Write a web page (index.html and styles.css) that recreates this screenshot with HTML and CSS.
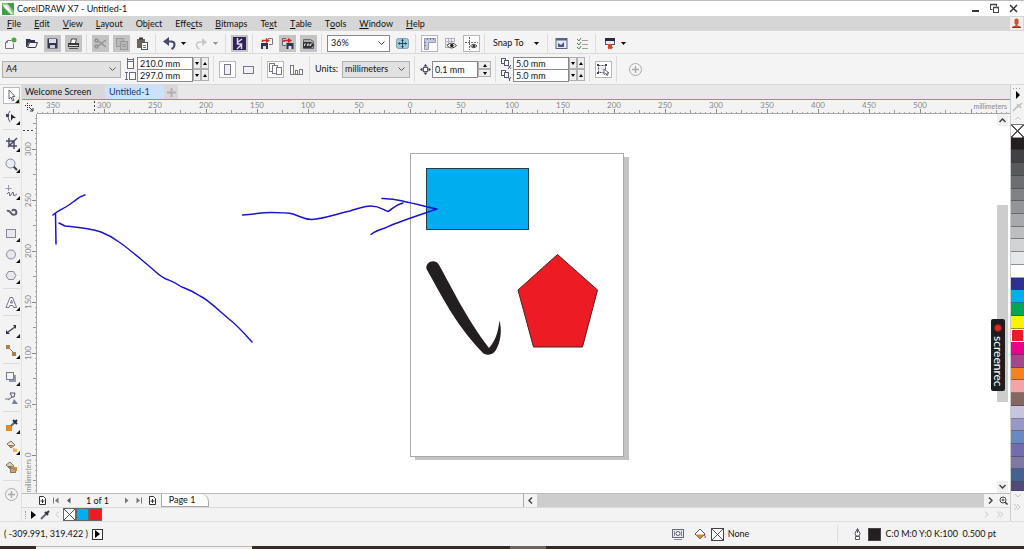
FILE: index.html
```html
<!DOCTYPE html>
<html lang="en">
<head>
<meta charset="utf-8">
<title>CorelDRAW X7 - Untitled-1</title>
<link rel="stylesheet" href="styles.css">
</head>
<body>
<header class="titlebar">
  <svg class="logo" width="12" height="12" viewBox="0 0 12 12"><rect width="12" height="12" fill="#3f9e46"/><path d="M0 0h5l7 8v4H9L1 4z" fill="#7cc576"/><path d="M1 1l4 2 6 8-2 0-7-7z" fill="#fff"/><path d="M3 1l3 1 4 6z" fill="#e4f5e2"/></svg>
  <h1 class="title">CorelDRAW X7 - Untitled-1</h1>
  <div class="window-buttons">
    <button aria-label="Minimize"><svg width="11" height="11"><path d="M2 8h7" stroke="#333" stroke-width="2"/></svg></button>
    <button aria-label="Restore"><svg width="11" height="11" fill="none" stroke="#444"><path d="M3.500 6.500h-2v-5h6v2"/><rect x="4.500" y="4.500" width="5" height="5"/><path d="M4 4.500h6M1 1.500h7" stroke-width="1.500"/></svg></button>
    <button aria-label="Close"><svg width="11" height="11"><path d="M2 2l7 7M9 2l-7 7" stroke="#333" stroke-width="1.500"/></svg></button>
  </div>
</header>

<nav class="menubar">
  <button><u>F</u>ile</button><button><u>E</u>dit</button><button><u>V</u>iew</button><button><u>L</u>ayout</button><button>Ob<u>j</u>ect</button><button>Effe<u>c</u>ts</button><button><u>B</u>itmaps</button><button>Te<u>x</u>t</button><button><u>T</u>able</button><button>T<u>o</u>ols</button><button><u>W</u>indow</button><button><u>H</u>elp</button>
  <button class="account" aria-label="Account"><svg width="11" height="11"><path d="M3.500 1.500q2-2 4 0v4l-1 1v1l3 1v1.500h-8v-1.500l3-1v-1l-1-1z" fill="#d0502a"/><path d="M1 9.500h9" stroke="#8a3a20"/></svg></button>
</nav>

<div class="toolbar standard" role="toolbar" aria-label="Standard">
  <button class="tool" aria-label="New"><svg width="13" height="13"><path d="M3.500 3.500h4M3.500 3.500l-2 2v6h8v-5" fill="none" stroke="#777"/><path d="M1.500 5.500h2v-2" fill="none" stroke="#777"/><circle cx="10" cy="3" r="2.500" fill="#4aa845"/></svg></button>
  <button class="tool" aria-label="Open"><svg width="13" height="13"><path d="M1 2h4l1 1h4v2H4l-2 5H1z" fill="#34344e"/><path d="M4.500 5.500h8l-2 5h-8z" fill="#f5f5fa" stroke="#34344e"/></svg></button>
  <button class="tool shaded" aria-label="Save"><svg width="13" height="13"><path d="M1.500 1.500h9l1 1v9h-10z" fill="#34344e"/><rect x="3" y="2" width="7" height="4" fill="#d8dcec"/><rect x="4" y="8" width="5" height="3" fill="#ccd"/></svg></button>
  <button class="tool shaded" aria-label="Print"><svg width="13" height="13"><path d="M3.500 6l1-4h5l-1 4" fill="#fff" stroke="#444"/><path d="M1 6h11v4H1z" fill="#3a3a3a"/><path d="M2 8.500h9" stroke="#ddd"/><path d="M2 11.500h9" stroke="#555"/></svg></button>
  <i class="sep"></i>
  <button class="tool shaded" aria-label="Cut"><svg width="13" height="13" fill="none" stroke="#929292" stroke-width="1.500"><path d="M4 4l8 6M4 9l8-6"/><circle cx="2.500" cy="3.500" r="1.500"/><circle cx="2.500" cy="9.500" r="1.500"/></svg></button>
  <button class="tool shaded" aria-label="Copy"><svg width="13" height="13" fill="#b8b8b8" stroke="#9a9a9a"><rect x="1.500" y="1.500" width="7" height="8"/><rect x="5.500" y="4.500" width="7" height="8"/><path d="M7 7.500h4M7 9.500h4"/></svg></button>
  <button class="tool" aria-label="Paste"><svg width="13" height="13"><rect x="1" y="2" width="8" height="9" fill="#6e6558"/><path d="M3 1.500h4" stroke="#333" stroke-width="2"/><rect x="5.500" y="5.500" width="6" height="7" fill="#fff" stroke="#555"/><path d="M7 8.500h3M7 10.500h3" stroke="#777"/></svg></button>
  <i class="sep"></i>
  <div class="split"><button class="tool" aria-label="Undo"><svg width="13" height="13"><path d="M6 0v9L0 4.500z" fill="#4a4a6c"/><path d="M5 4.500h3q3.500 0 3.500 3t-3 4.500" fill="none" stroke="#4a4a6c" stroke-width="2"/></svg></button><button class="drop" aria-label="Undo list"><svg width="5" height="3"><path d="M0 0h5L2.500 3z"/></svg></button></div>
  <div class="split"><button class="tool" aria-label="Redo"><svg width="13" height="13"><path d="M7 1v8l5-4z" fill="#c8c8c8"/><path d="M8 5H5q-3.500 0-3.500 3t3 4" fill="none" stroke="#c8c8c8" stroke-width="1.500"/></svg></button><button class="drop faded" aria-label="Redo list"><svg width="5" height="3"><path d="M0 0h5L2.500 3z"/></svg></button></div>
  <i class="sep"></i>
  <button class="tool shaded" aria-label="Search content"><svg width="13" height="13"><rect width="13" height="13" fill="#32215d"/><path d="M4.500 1v6h4v5M9 2L5 5M9 7l-5 5" fill="none" stroke="#ddd" stroke-width="1.500"/></svg></button>
  <i class="sep"></i>
  <button class="tool" aria-label="Import"><svg width="13" height="13"><path d="M8 1.500h4.500v6H9" fill="#fff" stroke="#778"/><rect x="1" y="6" width="7" height="6" fill="#34344e"/><rect x="3" y="9" width="3" height="3" fill="#dde"/><path d="M2.500 5V3.500H6" fill="none" stroke="#d22" stroke-width="1.500"/><path d="M6 1l4 2.500L6 6z" fill="#d22"/></svg></button>
  <button class="tool shaded" aria-label="Export"><svg width="13" height="13"><path d="M5 1.500H1.500v7H5" fill="#ddd" stroke="#667"/><rect x="5.500" y="6" width="7" height="6" fill="#34344e"/><rect x="7.500" y="9" width="3" height="3" fill="#dde"/><path d="M3 5V3.500h4" fill="none" stroke="#c22" stroke-width="1.500"/><path d="M7 1l4 2.500L7 6z" fill="#c22"/></svg></button>
  <button class="tool shaded" aria-label="Publish to PDF"><svg width="13" height="13"><path d="M1.500 2.500h7l3 2v7h-10z" fill="#aaa" stroke="#667"/><path d="M1 5h8l3.500 3L9 11H1z" fill="#333"/><path d="M2.500 9V7H4M5.500 9V7H7v2M8.500 9V7H10" stroke="#ccc" fill="none"/></svg></button>
  <i class="sep"></i>
  <label class="select-box zoom-level"><select aria-label="Zoom level"><option>36%</option></select><svg width="7" height="5"><path d="M.5.5l3 3 3-3" fill="none" stroke="#444"/></svg></label>
  <button class="tool" aria-label="Full screen preview"><svg width="13" height="13"><rect x=".5" y="1.500" width="12" height="10" rx="2" fill="#9fc9d6" stroke="#7fa3b5"/><path d="M6.500 2v9M2 6.500h9" stroke="#234b66"/><path d="M6.500 2L5 4h3zM6.500 11L5 9h3zM2 6.500L4 5v3zM11 6.500L9 5v3z" fill="#234b66"/></svg></button>
  <i class="sep"></i>
  <button class="tool boxed" aria-label="Show rulers"><svg width="13" height="13"><path d="M1.500 1.500h11v4h-7v7h-4z" fill="#c5cbe2" stroke="#9499b3"/><path d="M4.500 1v2M7.500 1v2M10.500 1v2M1 5.500h2M1 8.500h2" stroke="#7a80a0"/></svg></button>
  <button class="tool" aria-label="Show grid"><svg width="13" height="13"><path d="M1 1.500h10M1 4.500h10M1 7.500h4M1 10.500h4M1.500 1v10M4.500 1v10M7.500 1v4M10.500 1v4" stroke="#b1b1c2"/><path d="M3 8.500q4.500-5 9.500 0-5 5-9.500 0z" fill="#fff" stroke="#444"/><circle cx="7.800" cy="8.500" r="1.800" fill="#222"/></svg></button>
  <button class="tool boxed" aria-label="Show guidelines"><svg width="13" height="13"><path d="M4.500 0v13M0 5.500h13" stroke="#666" stroke-dasharray="2 1"/><path d="M5.500 9q3-3.500 6.500 0-3.500 3.500-6.500 0z" fill="#fff" stroke="#555"/><circle cx="8.800" cy="9" r="1.500" fill="#333"/></svg></button>
  <i class="sep"></i>
  <button class="snap">Snap To<svg width="5" height="3"><path d="M0 0h5L2.500 3z"/></svg></button>
  <i class="sep"></i>
  <button class="tool" aria-label="Options"><svg width="13" height="13"><rect x="1" y="1.500" width="11" height="10" fill="#e7eaf7" stroke="#5a6285"/><path d="M1 2.500h11" stroke="#5a6285" stroke-width="2"/><path d="M3 10V6l3 2 3-3v5z" fill="#4b5684"/></svg></button>
  <button class="tool" aria-label="Object properties"><svg width="13" height="13" fill="none" stroke="#9aa59a"><path d="M6 3.500h6M6 7.500h6M6 11.500h6"/><path d="M1 2l2 2 2-3M1 6l2 2 2-3M1 10l2 2 2-3" stroke="#4c8a4c"/></svg></button>
  <i class="sep"></i>
  <div class="split"><button class="tool" aria-label="Application launcher"><svg width="13" height="13"><rect x="2.500" y="1.500" width="9" height="6" fill="#e8e8f0" stroke="#55556e"/><path d="M2 2.500h10" stroke="#2a2a44" stroke-width="3"/><path d="M5 7h4v3h1.500L8 12.500l-1-1-1.500 1L4.500 10H5z" fill="#d8452c"/></svg></button><button class="drop" aria-label="Launcher list"><svg width="5" height="3"><path d="M0 0h5L2.500 3z"/></svg></button></div>
</div>

<div class="toolbar properties" role="toolbar" aria-label="Property bar">
  <label class="select-box flat page-size"><select aria-label="Page size"><option>A4</option></select><svg width="7" height="5"><path d="M.5.5l3 3 3-3" fill="none" stroke="#555"/></svg></label>
  <div class="pair">
    <div class="field"><svg width="11" height="11" fill="none" stroke="#6a6a88"><rect x="2.500" y="3.500" width="6" height="7" fill="#fff"/><path d="M2 1.500h7M2.500 0v3M8.500 0v3"/></svg><input aria-label="Page width" value="210.0 mm"><button aria-label="Decrease"><svg width="4" height="3"><path d="M0 0h4L2 3z"/></svg></button><button aria-label="Increase"><svg width="4" height="3"><path d="M0 3h4L2 0z"/></svg></button></div>
    <div class="field"><svg width="11" height="11" fill="none" stroke="#6a6a88"><rect x="4.500" y="2.500" width="6" height="7" fill="#fff"/><path d="M1.500 2v8M0 2.500h3M0 9.500h3"/></svg><input aria-label="Page height" value="297.0 mm"><button aria-label="Decrease"><svg width="4" height="3"><path d="M0 0h4L2 3z"/></svg></button><button aria-label="Increase"><svg width="4" height="3"><path d="M0 3h4L2 0z"/></svg></button></div>
  </div>
  <i class="sep"></i>
  <button class="tool boxed" aria-label="Portrait"><svg width="13" height="13"><rect x="3.500" y="1.500" width="6" height="10" fill="#f0f0f6" stroke="#778"/></svg></button>
  <button class="tool" aria-label="Landscape"><svg width="13" height="13"><rect x="1.500" y="3.500" width="10" height="7" fill="#f0f0f6" stroke="#778"/></svg></button>
  <i class="sep"></i>
  <button class="tool boxed" aria-label="All pages"><svg width="13" height="13" fill="#fff" stroke="#778"><rect x=".5" y=".5" width="5" height="8"/><rect x="3.500" y="2.500" width="5" height="8"/><rect x="7.500" y="4.500" width="5" height="7"/></svg></button>
  <button class="tool" aria-label="Current page"><svg width="13" height="13" fill="#fff" stroke="#778"><rect x=".5" y="2.500" width="3" height="9"/><rect x="5.500" y="7.500" width="2" height="4"/><rect x="9.500" y="6.500" width="3" height="5"/><path d="M4 11.500h6"/></svg></button>
  <i class="sep"></i>
  <label class="units-label" for="units">Units:</label>
  <div class="select-box flat units"><select id="units"><option>millimeters</option></select><svg width="7" height="5"><path d="M.5.5l3 3 3-3" fill="none" stroke="#555"/></svg></div>
  <i class="sep"></i>
  <div class="field nudge"><svg width="11" height="11"><rect x="3.500" y="3.500" width="4" height="4" fill="#fff" stroke="#555577"/><path d="M5.500 0L3.500 2.500h4zM5.500 11l-2-2.500h4zM0 5.500l2.500-2v4zM11 5.500l-2.500-2v4z" fill="#333344"/></svg><input aria-label="Nudge distance" value="0.1 mm"><div class="spin"><button aria-label="Increase"><svg width="4" height="3"><path d="M0 3h4L2 0z"/></svg></button><button aria-label="Decrease"><svg width="4" height="3"><path d="M0 0h4L2 3z"/></svg></button></div></div>
  <i class="sep"></i>
  <div class="pair">
    <div class="field"><svg width="11" height="11" fill="#fff" stroke="#555577"><rect x=".5" y=".5" width="4" height="5"/><rect x="3.500" y="2.500" width="4" height="5"/><path d="M7 7l3 4M10 7l-3 4"/></svg><input aria-label="Duplicate distance x" value="5.0 mm"><button aria-label="Decrease"><svg width="4" height="3"><path d="M0 0h4L2 3z"/></svg></button><button aria-label="Increase"><svg width="4" height="3"><path d="M0 3h4L2 0z"/></svg></button></div>
    <div class="field"><svg width="11" height="11" fill="#fff" stroke="#555577"><rect x=".5" y=".5" width="4" height="5"/><rect x="3.500" y="2.500" width="4" height="5"/><path d="M7 7l1.500 2L10 7M8.500 9v2"/></svg><input aria-label="Duplicate distance y" value="5.0 mm"><button aria-label="Decrease"><svg width="4" height="3"><path d="M0 0h4L2 3z"/></svg></button><button aria-label="Increase"><svg width="4" height="3"><path d="M0 3h4L2 0z"/></svg></button></div>
  </div>
  <i class="sep"></i>
  <button class="tool boxed" aria-label="Treat as filled"><svg width="13" height="13"><rect x="1.500" y="2.500" width="7" height="7" fill="#f0f0fa" stroke="#556" stroke-dasharray="2 1"/><path d="M0 1h2v2H0zM8 1h2v2H8zM0 9h2v2H0z" fill="#445"/><path d="M7 6l5 4-2 0 1 2-1 .5-1-2-2 1z" fill="#fff" stroke="#667"/></svg></button>
  <i class="sep"></i>
  <button class="tool add" aria-label="Customize"><svg width="13" height="13" fill="none" stroke="#aaa"><circle cx="6.500" cy="6.500" r="6"/><path d="M6.500 3v7M3 6.500h7" stroke-width="1.500"/></svg></button>
</div>

<main class="workspace">
  <aside class="toolbox">
    <button class="tool boxed fly" aria-label="Pick"><svg width="13" height="13"><path d="M4 1v9l2-2 1.500 4 1.500-.5L7.500 7.500H10z" fill="#fff" stroke="#667"/></svg></button>
    <button class="tool fly" aria-label="Shape"><svg width="13" height="13"><path d="M5 12Q1 6 5 1" fill="none" stroke="#556"/><rect x="1" y="4" width="3" height="3" fill="#445"/><path d="M6 4l5 4H8l-2 3z" fill="#223"/></svg></button>
    <i class="sep"></i>
    <button class="tool fly" aria-label="Crop"><svg width="13" height="13" fill="none" stroke="#4c4c68" stroke-width="1.500"><path d="M4 1v8h8M1 4h8v8M12 1L3 10"/></svg></button>
    <button class="tool fly" aria-label="Zoom"><svg width="13" height="13"><path d="M8 8l4 4" stroke="#445" stroke-width="2"/><circle cx="5.500" cy="5.500" r="4.500" fill="#e9edf5" stroke="#889"/></svg></button>
    <i class="sep"></i>
    <button class="tool fly" aria-label="Freehand"><svg width="13" height="13" fill="none" stroke="#667"><path d="M3.500 0v6M.5 3.500h6" stroke="#99a"/><path d="M2 9l2-2 1 4 3-4 1 4 3-2"/></svg></button>
    <button class="tool" aria-label="Artistic media"><svg width="13" height="13" fill="none" stroke="#5a5a6c" stroke-width="2"><path d="M2 5q2-1 4 2t5 1q1-3-1-4t-3 1"/></svg></button>
    <button class="tool fly" aria-label="Rectangle"><svg width="13" height="13"><rect x="1.500" y="2.500" width="9" height="8" fill="#e8e8ee" stroke="#889"/></svg></button>
    <button class="tool fly" aria-label="Ellipse"><svg width="13" height="13"><ellipse cx="6" cy="6.500" rx="4.500" ry="4.500" fill="#e8e8ee" stroke="#889"/></svg></button>
    <button class="tool fly" aria-label="Polygon"><svg width="13" height="13"><path d="M3.500 2.500h5L11 6.500l-2.500 4h-5L1 6.500z" fill="#e8e8ee" stroke="#889"/></svg></button>
    <i class="sep"></i>
    <button class="tool fly" aria-label="Text"><svg width="13" height="13" fill="none" stroke="#778"><path d="M1 11.500h3l.8-2h3l.8 2h3L7.500 1.500H5z" fill="#fff"/><path d="M5.500 7h2L6.500 4z"/></svg></button>
    <i class="sep"></i>
    <button class="tool fly" aria-label="Dimension"><svg width="13" height="13"><path d="M3 9l7-5" stroke="#445" stroke-width="1.500"/><path d="M1 7l4 4H1zM8 2l3 4V2z" fill="#334"/></svg></button>
    <button class="tool fly" aria-label="Connector"><svg width="13" height="13"><path d="M4 4l6 6" stroke="#778"/><rect x="1" y="1" width="4" height="4" fill="#b07f48"/><rect x="7" y="8" width="4" height="4" fill="#b07f48"/></svg></button>
    <i class="sep"></i>
    <button class="tool fly" aria-label="Drop shadow"><svg width="13" height="13"><rect x="4" y="4" width="7" height="7" fill="#9298ac"/><rect x="1.500" y="1.500" width="7" height="7" fill="#f2f2fa" stroke="#778"/></svg></button>
    <button class="tool" aria-label="Transparency"><svg width="13" height="13"><path d="M5 1h5l-1 4H7zM7 5L3 8" fill="#eef" stroke="#556"/><path d="M7 12l2-5 4 5z" fill="#77809c"/><path d="M0 7h4" stroke="#778"/></svg></button>
    <i class="sep"></i>
    <button class="tool fly" aria-label="Color eyedropper"><svg width="13" height="13"><rect x="1" y="6" width="6" height="6" fill="#e28b28"/><path d="M6 7l4-4" stroke="#566884" stroke-width="2"/><path d="M8 1l4 4M9 4l3-3" stroke="#243047" stroke-width="2"/></svg></button>
    <button class="tool fly" aria-label="Interactive fill"><svg width="13" height="13"><path d="M2 4l4-3 4 4-4 3z" fill="#e8e0d0" stroke="#776"/><path d="M3 5h6L6 7z" fill="#a87038"/><path d="M8 8l4 1v3H8z" fill="#eeb44a"/></svg></button>
    <button class="tool" aria-label="Smart fill"><svg width="13" height="13"><path d="M1 4l4-3 4 4-4 3z" fill="#ddd0bb" stroke="#776"/><path d="M2 5h6L5 7z" fill="#946238"/><rect x="5.500" y="7.500" width="5" height="4" fill="#d9a860" stroke="#876"/><rect x="8" y="6" width="4" height="4" fill="#c78d47"/></svg></button>
    <i class="sep"></i>
    <button class="tool" aria-label="Customize toolbox"><svg width="13" height="13" fill="none" stroke="#aaa"><circle cx="6.500" cy="6.500" r="6"/><path d="M6.500 3v7M3 6.500h7" stroke-width="1.500"/></svg></button>
  </aside>

  <section class="document">
    <div class="tabs" role="tablist">
      <button class="tab" role="tab">Welcome Screen</button><button class="tab active" role="tab">Untitled-1</button><button class="tab new" aria-label="New document"><svg width="9" height="9"><path d="M4.500 0v9M0 4.500h9" stroke="#b0b0b0" stroke-width="2"/></svg></button>
    </div>
    <div class="sheet">
      <button class="origin" aria-label="Ruler origin"><svg width="11" height="11" fill="none" stroke="#333"><path d="M3.500 1v8M1 3.500h8" stroke-dasharray="1 1"/><path d="M5 5l4 4M9 6v3H6"/></svg></button>
      <div class="ruler-x">
        <svg class="scale">
          <defs><pattern id="ticks-x" x="16" y="0" width="51" height="14" patternUnits="userSpaceOnUse"><path d="M.5 9v4" stroke="#888"/><path d="M25.500 10v3" stroke="#999"/><path d="M5.500 12v1M10.500 12v1M15.500 12v1M20.500 12v1M30.500 12v1M35.500 12v1M40.500 12v1M45.500 12v1" stroke="#aaa"/></pattern></defs>
          <rect width="100%" height="14" fill="url(#ticks-x)"/>
          <path d="M57.500 1v12" stroke="#444" stroke-dasharray="2 2"/>
          <g text-anchor="middle"><text x="16" y="8">350</text><text x="67" y="8">300</text><text x="118" y="8">250</text><text x="169" y="8">200</text><text x="220" y="8">150</text><text x="271" y="8">100</text><text x="322" y="8">50</text><text x="373" y="8">0</text><text x="424" y="8">50</text><text x="475" y="8">100</text><text x="526" y="8">150</text><text x="577" y="8">200</text><text x="628" y="8">250</text><text x="679" y="8">300</text><text x="730" y="8">350</text><text x="781" y="8">400</text><text x="832" y="8">450</text><text x="883" y="8">500</text></g>
        </svg>
        <span class="unit">millimeters</span>
      </div>
      <div class="ruler-y">
        <svg class="scale">
          <defs><pattern id="ticks-y" x="0" y="35" width="15" height="51" patternUnits="userSpaceOnUse"><path d="M10 .5h4" stroke="#888"/><path d="M11 25.500h3" stroke="#999"/><path d="M13 5.500h1M13 10.500h1M13 15.500h1M13 20.500h1M13 30.500h1M13 35.500h1M13 40.500h1M13 45.500h1" stroke="#aaa"/></pattern></defs>
          <rect width="15" height="100%" fill="url(#ticks-y)"/>
          <path d="M1 16.500h12" stroke="#444" stroke-dasharray="2 2"/>
          <g text-anchor="middle"><text transform="translate(9 35) rotate(-90)">300</text><text transform="translate(9 86) rotate(-90)">250</text><text transform="translate(9 137) rotate(-90)">200</text><text transform="translate(9 188) rotate(-90)">150</text><text transform="translate(9 239) rotate(-90)">100</text><text transform="translate(9 290) rotate(-90)">50</text><text transform="translate(9 341) rotate(-90)">0</text></g>
        </svg>
        <span class="unit">millimeters</span>
      </div>
      <div class="canvas">
        <svg class="drawing">
          <g transform="translate(-37 -114)">
            <path d="M415 157h214v303H415z" fill="#c3c3c3"/>
            <rect x="410.500" y="153.500" width="213" height="303" fill="#fff" stroke="#aaa"/>
            <rect x="426.500" y="168.500" width="102" height="61" fill="#00aeef" stroke="#20404d"/>
            <path d="M557.500 254.500l40 35.500-15 57h-49l-15.500-57z" fill="#ed1c24" stroke="#4d2020"/>
            <path d="M426.500 269C425 262 435 258 439 265C451 286 466 318 489 348C496 340 498 332 499.500 320.500C502 330 501 341 496 350C492 356 485 356 482 352C455 323 445 302 426.500 269z" fill="#231f20"/>
            <g fill="none" stroke="#1c14c8" stroke-width="1.500" stroke-linecap="round" stroke-linejoin="round">
              <path d="M242.500 215C257 214 260 212.500 271 212.500C281 212.500 287 212.500 293 214C302 217 304 219.500 312 219.500C323 219 338 213.500 350 211C360 208 364 206 371 206C380 206 383 210 388 211.500C393 209 394 205 403 203"/>
              <path d="M382 198.500C397 198 417 205 437 209C417 216 397 222 385 228C378 230 374 232 371 234.500"/>
              <path d="M252 342C244 333 237 325 229 319C215 307 207 299 200 296C190 289 183 288 180 286C173 281 171 281 166 279C158 275 154 270 149 266C137 256 128 248 119 242C111 236 106 234 101 232C89 228 75 227 65 226L59 223"/>
              <path d="M53 215C58 210 66 208 73 202C79 198 78 197 85 195M55.500 213L56 244"/>
            </g>
          </g>
        </svg>
        <div class="scroll-y">
          <button aria-label="Scroll up"><svg width="7" height="5"><path d="M.5 4l3-3 3 3" fill="none" stroke="#444" stroke-width="1.500"/></svg></button>
          <i class="rest-before"></i><i class="thumb"></i><i class="rest-after"></i>
          <button aria-label="Scroll down"><svg width="7" height="5"><path d="M.5 1l3 3 3-3" fill="none" stroke="#444" stroke-width="1.500"/></svg></button>
        </div>
        <button class="recorder"><i class="rec"></i>screenrec</button>
      </div>
    </div>
    <div class="pages">
      <div class="page-nav">
        <button aria-label="Add page before"><svg width="9" height="9"><path d="M1.500.5h4l2 2v6h-6z" fill="#fff" stroke="#333"/><path d="M4.500 3v4M2.500 5h4" stroke="#333"/></svg></button>
        <button aria-label="First page"><svg width="9" height="9"><path d="M2.500 1.500v6" stroke="#777"/><path d="M7.500 1.500v6L4 4.500z" fill="#777"/></svg></button>
        <button aria-label="Previous page"><svg width="9" height="9"><path d="M6.500 1.500v6L3 4.500z" fill="#555566"/></svg></button>
        <span class="count">1 of 1</span>
        <button aria-label="Next page"><svg width="9" height="9"><path d="M3 1.500v6l3.500-3z" fill="#777"/></svg></button>
        <button aria-label="Last page"><svg width="9" height="9"><path d="M1.500 1.500v6L5 4.500z" fill="#777"/><path d="M6.500 1.500v6" stroke="#777"/></svg></button>
        <button aria-label="Add page after"><svg width="9" height="9"><path d="M1.500.5h4l2 2v6h-6z" fill="#fff" stroke="#333"/><path d="M4.500 3v4M2.500 5h4" stroke="#333"/></svg></button>
        <button class="page-tab">Page 1</button>
      </div>
      <div class="scroll-x">
        <button aria-label="Scroll left"><svg width="5" height="7"><path d="M4 .5l-3 3 3 3" fill="none" stroke="#444" stroke-width="1.500"/></svg></button>
        <i class="thumb"></i>
        <button aria-label="Scroll right"><svg width="5" height="7"><path d="M1 .5l3 3-3 3" fill="none" stroke="#444" stroke-width="1.500"/></svg></button>
        <button aria-label="Navigator"><svg width="9" height="9"><path d="M5.500 5.500l3 3" stroke="#333" stroke-width="1.500"/><circle cx="4" cy="4" r="3" fill="#fff" stroke="#444"/><path d="M2.500 4h3M4 2.500v3" stroke="#444"/></svg></button>
      </div>
    </div>
    <div class="used-colors">
      <i class="grip"></i>
      <button class="mini" aria-label="Palette menu"><svg width="5" height="8"><path d="M0 0v8l5-4z"/></svg></button>
      <button class="mini" aria-label="Eyedropper"><svg width="10" height="10"><path d="M1 9l5-5" stroke="#667" stroke-width="2"/><path d="M5 2l3 3M6 4l3-3" stroke="#333344" stroke-width="2"/></svg></button>
      <button class="mini narrow" aria-label="Scroll palette"><svg width="5" height="7"><path d="M4 .5l-3 3 3 3" fill="none" stroke="#c4c4c4"/></svg></button>
      <button class="chip none" aria-label="No color"></button><button class="chip cyan" aria-label="Cyan"></button><button class="chip red" aria-label="Red"></button>
      <span class="more"><svg width="22" height="7" fill="none" stroke="#c4c4c4"><path d="M1 .5l3 3-3 3M13 .5l3 3-3 3M16 .5l3 3-3 3"/></svg></span>
    </div>
  </section>

  <aside class="palette">
    <div class="palette-head">
      <svg width="13" height="38"><path d="M2 3.500h8" stroke="#999" stroke-dasharray="1 2"/><path d="M5 6v8l4-4z"/><path d="M2 26l5-5M6 19l4 4M8 21l3-3" stroke="#bbb" stroke-width="1.500"/><path d="M4 35l3-3 3 3" fill="none" stroke="#ccc"/></svg>
    </div>
    <div class="swatches">
      <button class="none" aria-label="No color"></button>
      <button style="background:#231f20" aria-label="Black"></button>
      <button style="background:#414042" aria-label="90% black"></button>
      <button style="background:#58595b" aria-label="80% black"></button>
      <button style="background:#6d6e71" aria-label="70% black"></button>
      <button style="background:#808285" aria-label="60% black"></button>
      <button style="background:#939598" aria-label="50% black"></button>
      <button style="background:#a7a9ac" aria-label="40% black"></button>
      <button style="background:#bcbec0" aria-label="30% black"></button>
      <button style="background:#d1d3d4" aria-label="20% black"></button>
      <button style="background:#e6e7e8" aria-label="10% black"></button>
      <button style="background:#ffffff" aria-label="White"></button>
      <button style="background:#2e3192" aria-label="Blue"></button>
      <button style="background:#00aeef" aria-label="Cyan"></button>
      <button style="background:#00a651" aria-label="Green"></button>
      <button style="background:#fff200" aria-label="Yellow"></button>
      <button class="current" style="background:#ed1c24" aria-label="Red"></button>
      <button style="background:#ec008c" aria-label="Magenta"></button>
      <button style="background:#a3488c" aria-label="Purple"></button>
      <button style="background:#f58220" aria-label="Orange"></button>
      <button style="background:#f5a3a8" aria-label="Pink"></button>
      <button style="background:#836760" aria-label="Brown"></button>
      <button style="background:#c6c4e0" aria-label="Lavender"></button>
      <button style="background:#9996c8" aria-label="Light violet"></button>
      <button style="background:#688ac4" aria-label="Soft blue"></button>
      <button style="background:#736cb0" aria-label="Violet"></button>
      <button style="background:#8078a4" aria-label="Grey violet"></button>
      <button style="background:#44628f" aria-label="Steel blue"></button>
      <button class="last" style="background:#55497c" aria-label="Deep violet"></button>
    </div>
    <div class="palette-foot"><svg width="13" height="24" fill="none" stroke="#c4c4c4"><path d="M4 3l3 3 3-3M3 13l3 3-3 3M6 13l3 3-3 3"/></svg></div>
  </aside>
</main>

<footer class="statusbar">
  <span>( -309.991, 319.422 )</span>
  <button class="expand" aria-label="Status options"><svg width="5" height="8"><path d="M0 0v8l5-4z"/></svg></button>
  <div class="fill-info">
    <svg width="12" height="12"><rect x=".5" y="1.500" width="11" height="8" fill="#e8e8f0" stroke="#667"/><circle cx="6" cy="5.500" r="2" fill="#fff" stroke="#556"/><path d="M2.500 3v5M9.500 3v5M2 11.500h8" stroke="#889"/></svg>
    <svg class="bucket" width="12" height="12"><path d="M1 6l5-5 5 5-5 5z" fill="#fff" stroke="#556"/><path d="M1.500 6.500h9L6 11z" fill="#d58a2e"/><path d="M10 6q2 3 1 4" stroke="#a33" fill="none"/></svg>
    <i class="box none"></i><span>None</span>
  </div>
  <div class="outline-info">
    <svg width="9" height="12"><path d="M4.500.5L2 5.500 3 8h3l1-2.500zM2.500 8.500h4v3h-4zM4.500 1v4" fill="#fff" stroke="#556"/></svg>
    <i class="box black"></i><span>C:0 M:0 Y:0 K:100 &nbsp;0.500 pt</span>
  </div>
</footer>
<div class="taskbar"><i class="search"></i><i class="app"></i></div>
</body>
</html>
```

FILE: styles.css
```css
* { box-sizing: border-box; }

body {
  margin: 0;
  height: 100vh;
  display: flex;
  flex-direction: column;
  overflow: hidden;
  background: #f3f3f3;
  color: #111;
  font: 9px/12px Lato, "Open Sans", sans-serif;
}

button, input, select { font: inherit; color: inherit; }

button {
  padding: 0;
  border: 0;
  background: none;
  display: flex;
  align-items: center;
  justify-content: center;
}

svg { display: block; flex: none; }

/* Title and menu */
.titlebar {
  height: 16px;
  flex: none;
  display: flex;
  align-items: center;
  gap: 3px;
  padding: 0 2px;
  border-top: 1px solid #bbb;
  background: #fff;
}
.title { margin: 0; font-size: 9px; font-weight: 400; }
.window-buttons { display: flex; gap: 8px; margin-left: auto; padding-right: 3px; }

.menubar {
  height: 15px;
  flex: none;
  display: flex;
  align-items: center;
  gap: 13px;
  padding-left: 7px;
  background: #d6d6d6;
}
.menubar u { text-underline-offset: 1px; }
.account { width: 13px; height: 13px; margin: 0 1px 0 auto; background: #eee; }

/* Toolbars */
.toolbar {
  height: 23px;
  flex: none;
  display: flex;
  align-items: center;
  gap: 4px;
  padding: 0 2px;
  border-bottom: 1px solid #dadada;
  background: #f4f4f4;
}
.toolbar.standard { padding-top: 2px; }
.toolbar.properties { height: 31px; }

.tool { width: 17px; height: 17px; flex: none; position: relative; }
.tool.shaded { background: #c4c4c4; }
.tool.boxed { border: 1px solid #b8b8b8; background: #fff; }
.tool.add { margin-left: 5px; }
.split { display: flex; }
.drop { width: 11px; }
.faded { opacity: .4; }
.snap { gap: 10px; padding: 0 4px 0 3px; }

.sep { width: 2px; height: 19px; flex: none; border-left: 1px solid #dcdcdc; }
.properties .sep { height: 26px; }

.select-box {
  height: 17px;
  display: flex;
  align-items: center;
  padding-right: 4px;
  border: 1px solid #888;
  background: #fff;
}
.select-box select {
  flex: 1;
  min-width: 0;
  padding: 0 3px;
  border: 0;
  appearance: none;
  background: none;
}
.select-box.flat { border-color: #b0b0b0; background: #e1e1e1; }
.zoom-level { width: 63px; }
.page-size { width: 119px; }
.units { width: 68px; }
.units select { padding: 0 2px; }
.units-label { width: 23px; }

.pair { display: flex; flex-direction: column; }
.field { display: flex; align-items: center; height: 12px; }
.field > svg { margin-right: 1px; }
.field input {
  width: 56px;
  height: 13px;
  padding: 0 2px;
  border: 1px solid #888;
  background: #fff;
}
.field button {
  width: 8px;
  height: 12px;
  border: 1px solid #b0b0b0;
  background: #eee;
}
.field.nudge { height: 17px; }
.nudge input { width: 46px; height: 17px; }
.spin { display: flex; flex-direction: column; }
.spin button { width: 13px; height: 8px; }

/* Workspace */
.workspace {
  flex: 1;
  min-height: 0;
  display: grid;
  grid-template-columns: 22px minmax(0, 1fr) 14px;
}
.toolbox {
  display: flex;
  flex-direction: column;
  align-items: center;
  gap: 4px;
  padding: 2px 1px 0 2px;
  border-right: 1px solid #e2e2e2;
  overflow: hidden;
}
.toolbox .sep { width: 17px; height: 2px; border-left: 0; border-top: 1px solid #dcdcdc; }
.fly::after {
  content: "";
  position: absolute;
  right: 0;
  bottom: 0;
  border: 2px solid #111;
  border-top-color: transparent;
  border-left-color: transparent;
}

.document { display: flex; flex-direction: column; min-height: 0; }
.tabs {
  height: 15px;
  flex: none;
  display: flex;
  background: #e8e8e8;
  border-bottom: 1px solid #3db1c8;
}
.tab { padding: 0 3px; width: 83px; justify-content: flex-start; background: #d8d8d8; }
.tab.active { width: 59px; padding: 0 4px; background: #cce2fb; color: #123a70; }
.tab.new { width: 14px; justify-content: center; }

.sheet {
  flex: 1;
  min-height: 0;
  display: grid;
  grid-template: 14px minmax(0, 1fr) / 15px minmax(0, 1fr);
}
.scale { width: 100%; height: 100%; font-size: 8px; fill: #888; }
.unit { font-size: 7px; line-height: 8px; color: #888; }
.ruler-x { display: flex; border-bottom: 1px solid #aaa; position: relative; }
.ruler-x .scale { min-width: 0; flex: 1 1 0; }
.ruler-x .unit { position: absolute; right: 3px; top: 2px; }
.ruler-y { border-right: 1px solid #aaa; position: relative; }
.ruler-y .unit { position: absolute; left: 2px; bottom: 0; writing-mode: vertical-rl; transform: rotate(180deg); }

.canvas { display: flex; position: relative; background: #fff; padding-right: 2px; }
.drawing { flex: 1 1 0; min-width: 0; height: 100%; }
.scroll-y { width: 11px; display: flex; flex-direction: column; }
.scroll-y button { height: 12px; background: #f0f0f0; }
.thumb { background: #cdcdcd; }
.scroll-y .thumb { flex: 196; }
.rest-before { flex: 79; }
.rest-after { flex: 79; }
.recorder {
  position: absolute;
  right: 5px;
  top: 205px;
  width: 14px;
  height: 72px;
  gap: 4px;
  border-radius: 2px;
  background: #1d1d1d;
  color: #fff;
  font: 12px/14px Lato, sans-serif;
  writing-mode: vertical-rl;
}
.rec { width: 8px; height: 8px; border: 1px solid #8c1a14; border-radius: 50%; background: #e02a20; }

.pages { height: 14px; flex: none; display: flex; padding-left: 15px; border-top: 1px solid #bbb; }
.page-nav { flex: 486; display: flex; align-items: center; gap: 4px; padding-left: 1px; border-right: 1px solid #aaa; }
.page-nav button { width: 9px; }
.count { padding: 0 9px; }
.page-nav .page-tab {
  width: 48px;
  height: 13px;
  padding-right: 6px;
  border: solid #aaa;
  border-width: 0 1px 1px;
  border-radius: 0 8px 0 0;
  background: #fff;
}
.scroll-x { flex: 487; display: flex; align-items: stretch; background: #fff; }
.scroll-x button { width: 13px; background: #f3f3f3; }
.scroll-x .thumb { flex: 1; }

.used-colors {
  height: 14px;
  flex: none;
  display: flex;
  align-items: center;
  padding-left: 3px;
  border-top: 1px solid #dadada;
}
.grip { width: 2px; height: 8px; border-left: 1px dotted #999; }
.mini { width: 12px; height: 12px; }
.used-colors .chip { width: 13px; height: 13px; border: 1px solid #666; }
.used-colors .chip.cyan { background: #00aeef; }
.used-colors .chip.red { background: #ed1c24; }
.none {
  background:
    linear-gradient(45deg, transparent 46%, #555 46%, #555 54%, transparent 54%),
    linear-gradient(-45deg, transparent 46%, #555 46%, #555 54%, transparent 54%),
    #fff;
}
.more { margin-left: auto; padding-right: 4px; }

.palette { display: flex; flex-direction: column; min-height: 0; border-left: 1px solid #ccc; }
.palette-head { height: 39px; }
.palette-foot { height: 30px; }
.swatches { flex: 1; min-height: 0; display: flex; flex-direction: column; border: 1px solid #777; border-width: 1px 0 0; }
.swatches button { flex: 3 3 0; border-bottom: 1px solid rgba(60, 60, 60, .5); }
.swatches .current { border: 1px solid #fff; }
.swatches .last { flex: 2 2 0; }

/* Status bar */
.statusbar {
  height: 25px;
  flex: none;
  display: flex;
  align-items: center;
  gap: 4px;
  padding: 0 28px 0 4px;
  border-top: 1px solid #dedede;
}
.expand { width: 11px; height: 11px; border: 1px solid #333; background: #fff; }
.fill-info, .outline-info { display: flex; align-items: center; gap: 3px; }
.fill-info { margin-left: auto; }
.fill-info .bucket { margin: 0 2px 0 7px; }
.fill-info .box { margin-right: 1px; }
.outline-info { margin-left: 84px; padding-left: 15px; height: 18px; border-left: 1px solid #ddd; }
.box { width: 13px; height: 13px; border: 1px solid #444; }
.outline-info .box { background: #231f20; margin: 0 1px 0 3px; }

.taskbar { height: 3px; flex: none; display: flex; padding-left: 36px; background: #352a27; }
.search { width: 216px; background: #eee; border-top: 1px solid #bbb; }
.app { width: 36px; margin-left: 258px; background: #6b645c; }
```
